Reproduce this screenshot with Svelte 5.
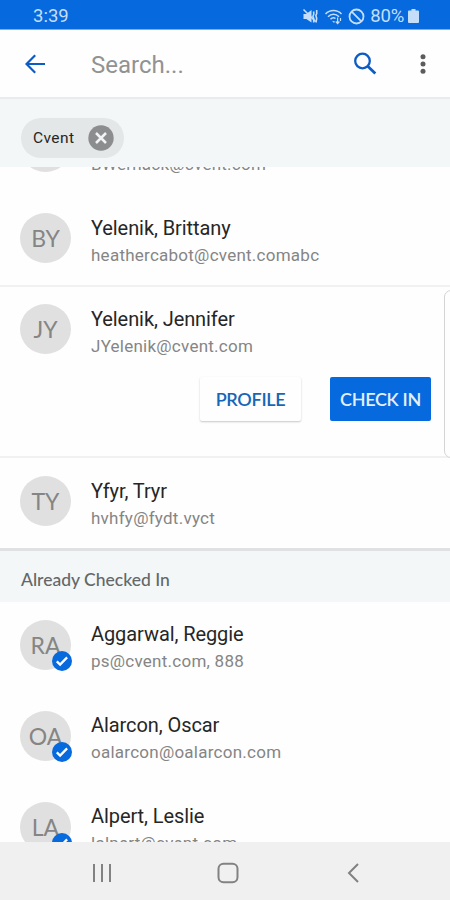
<script lang="ts">
	interface Attendee {
		initials: string;
		name: string;
		email: string;
		expanded?: boolean;
	}

	const query = 'Cvent';

	const pending: Attendee[] = [
		{ initials: '', name: '', email: 'BWernack@cvent.com' },
		{ initials: 'BY', name: 'Yelenik, Brittany', email: 'heathercabot@cvent.comabc' },
		{ initials: 'JY', name: 'Yelenik, Jennifer', email: 'JYelenik@cvent.com', expanded: true },
		{ initials: 'TY', name: 'Yfyr, Tryr', email: 'hvhfy@fydt.vyct' }
	];

	const checkedIn: Attendee[] = [
		{ initials: 'RA', name: 'Aggarwal, Reggie', email: 'ps@cvent.com, 888' },
		{ initials: 'OA', name: 'Alarcon, Oscar', email: 'oalarcon@oalarcon.com' },
		{ initials: 'LA', name: 'Alpert, Leslie', email: 'lalpert@cvent.com' }
	];
</script>

{#snippet person(attendee: Attendee, checked: boolean)}
	<div class="person">
		<div class="avatar">
			{attendee.initials}
			{#if checked}
				<svg class="badge" viewBox="0 0 20 20">
					<circle cx="10" cy="10" r="10" fill="#0669dd" />
					<path d="M4.8 10.4l3.3 3.2 7-7.2" fill="none" stroke="#fff" stroke-width="2.3" />
				</svg>
			{/if}
		</div>
		<div class="details">
			<div class="name">{attendee.name}</div>
			<div class="email">{attendee.email}</div>
		</div>
	</div>
{/snippet}

<div class="screen">
	<div class="status-bar">
		<span class="time">3:39</span>
		<div class="status-icons">
			<svg width="17" height="17" viewBox="0 0 17 17" fill="none" stroke="#c4defa" stroke-width="1.6">
				<path d="M1.5 6h2.8L9.5 2v12.5L4.3 11H1.5z" fill="#c4defa" stroke="none" />
				<path d="M11.7 3.5v3l-.8 2 .8 2v4M14.7 2v3.5l-.8 2 .8 3-.8 4" />
				<path d="M1.5 1.5l12 12" />
			</svg>
			<svg width="19" height="17" viewBox="0 0 19 17" fill="none" stroke="#c4defa" stroke-width="1.5">
				<path d="M1.5 6c4.5-4.6 11.5-4.6 16 0M4 8.7c3.2-3.2 7.8-3.2 11 0M6.5 11.3c1.6-1.6 3.5-1.8 5-.8" />
				<path d="M8 12.7l2 2.2 1-1.5z" fill="#c4defa" stroke="none" />
				<path d="M13.6 9.5v6M11.8 13.5l1.8 2 1.8-2M16.5 10v3" stroke-width="1.2" />
			</svg>
			<svg width="17" height="17" viewBox="0 0 17 17" fill="none" stroke="#c4defa" stroke-width="1.8">
				<circle cx="8.5" cy="8.5" r="7" />
				<path d="M3.6 3.6l9.8 9.8" />
			</svg>
			<span class="percent">80%</span>
			<svg class="battery" width="11" height="14" viewBox="0 0 11 14" fill="#c4defa">
				<path d="M3.5 0h4v1.5H10a1 1 0 0 1 1 1V13a1 1 0 0 1-1 1H1a1 1 0 0 1-1-1V2.5a1 1 0 0 1 1-1h2.5z" />
			</svg>
		</div>
	</div>

	<header class="toolbar">
		<svg width="20" height="20" viewBox="0 0 20 20" fill="none" stroke="#0d5cc4" stroke-width="2.2">
			<path d="M20 10H2M10.2 1.2L1.5 10l8.7 8.8" />
		</svg>
		<span class="placeholder">Search...</span>
		<svg class="search" width="24" height="24" viewBox="0 0 24 24" fill="none" stroke="#0d5cc4">
			<circle cx="9.5" cy="9" r="7.3" stroke-width="2.3" />
			<path d="M14.5 14l7.8 7.5" stroke-width="2.8" />
		</svg>
		<svg class="more" width="6" height="20" viewBox="0 0 6 20" fill="#5c5c5c">
			<circle cx="3" cy="2.7" r="2.5" />
			<circle cx="3" cy="10" r="2.5" />
			<circle cx="3" cy="17.3" r="2.5" />
		</svg>
	</header>

	<div class="filters">
		<div class="chip">
			<span>{query}</span>
			<svg width="26" height="26" viewBox="0 0 26 26">
				<circle cx="13" cy="13" r="12.7" fill="#8b8d8e" />
				<path d="M8 8l10 10M18 8L8 18" stroke="#f1f3f4" stroke-width="2.5" />
			</svg>
		</div>
	</div>

	<main class="list">
		<section class="pending">
			{#each pending as attendee}
				<div class="row" class:expanded={attendee.expanded}>
					{@render person(attendee, false)}
					{#if attendee.expanded}
						<div class="actions">
							<button class="profile">PROFILE</button>
							<button class="check-in">CHECK IN</button>
						</div>
						<div class="edge-panel"></div>
					{/if}
				</div>
			{/each}
		</section>
		<h2 class="section-title">Already Checked In</h2>
		<section>
			{#each checkedIn as attendee}
				<div class="row">
					{@render person(attendee, true)}
				</div>
			{/each}
		</section>
	</main>

	<nav class="nav-bar">
		<svg width="20" height="20" viewBox="0 0 20 20" stroke="#828282" stroke-width="2">
			<path d="M2 1v18M10 1v18M18 1v18" />
		</svg>
		<svg class="home" width="22" height="22" viewBox="0 0 22 22" fill="none" stroke="#828282" stroke-width="2">
			<rect x="1.5" y="1.8" width="19" height="18.4" rx="5" />
		</svg>
		<svg width="12" height="20" viewBox="0 0 12 20" fill="none" stroke="#828282" stroke-width="2">
			<path d="M11 1L2 10l9 9" />
		</svg>
	</nav>
</div>

<style>
	.screen {
		display: flex;
		flex-direction: column;
		width: 450px;
		height: 900px;
		overflow: hidden;
		background: #fefefe;
		font-family: Roboto, sans-serif;
	}

	svg {
		display: block;
		flex: none;
	}

	.status-bar {
		display: flex;
		flex: none;
		align-items: center;
		justify-content: space-between;
		box-sizing: border-box;
		height: 30px;
		padding: 3px 31px 0 33px;
		border-bottom: 1px solid #79aeea;
		background: #0669dd;
		color: #c4defa;
		font-size: 18.5px;
	}

	.status-icons {
		display: flex;
		align-items: center;
		gap: 5px;
	}

	.percent {
		letter-spacing: -0.2px;
	}

	.battery {
		margin-left: -1px;
	}

	.toolbar {
		display: flex;
		flex: none;
		align-items: center;
		box-sizing: border-box;
		height: 69px;
		padding: 0 24px 0 25px;
		border-bottom: 2px solid #e8ecee;
	}

	.placeholder {
		flex: 1;
		margin-left: 46px;
		padding-top: 2px;
		color: #929292;
		font-size: 24px;
	}

	.search {
		margin-right: 43px;
	}

	.filters {
		flex: none;
		box-sizing: border-box;
		height: 68px;
		padding: 19px 21px 0;
		background: #f3f7f8;
	}

	.chip {
		display: inline-flex;
		align-items: center;
		justify-content: space-between;
		box-sizing: border-box;
		width: 103px;
		height: 40px;
		padding: 0 10px 0 12px;
		border-radius: 20px;
		background: #e4e7e8;
		color: #262626;
		font-size: 15.5px;
		letter-spacing: 0.4px;
	}

	.list {
		flex: 1;
		min-height: 0;
		overflow: hidden;
	}

	/* list is scrolled part of the way through the first row */
	.pending {
		margin-top: -63px;
	}

	.row {
		position: relative;
		box-sizing: border-box;
		height: 91px;
		padding: 18px 19px 0 20px;
	}

	.pending .row:nth-child(n + 2):not(:last-child) {
		height: 92px;
		border-bottom: 2px solid #f1f1f2;
	}

	.pending .row.expanded:not(:last-child) {
		height: 171px;
		padding-top: 17px;
	}

	.pending .row:last-child {
		height: 90px;
	}

	.person {
		display: flex;
		gap: 20px;
	}

	.avatar {
		position: relative;
		width: 51px;
		height: 50px;
		border-radius: 50%;
		background: #e0e0e0;
		color: #858585;
		font-family: Lato, sans-serif;
		font-size: 23px;
		line-height: 50px;
		text-align: center;
	}

	.badge {
		position: absolute;
		right: -1px;
		bottom: -1px;
		width: 20px;
		height: 20px;
	}

	.details {
		padding-top: 1px;
		white-space: nowrap;
	}

	.pending .details {
		padding-top: 2px;
	}

	.name {
		height: 27px;
		color: #262626;
		font-size: 20px;
		line-height: 27px;
		letter-spacing: -0.08px;
	}

	.email {
		color: #858585;
		font-size: 17px;
		line-height: 27px;
		letter-spacing: 0.25px;
	}

	.actions {
		display: flex;
		justify-content: flex-end;
		gap: 29px;
		margin-top: 17px;
	}

	button {
		width: 101px;
		height: 44px;
		padding: 0;
		border: none;
		border-radius: 2px;
		font-family: Lato, sans-serif;
		font-size: 18px;
		font-weight: 600;
		letter-spacing: -0.3px;
		white-space: nowrap;
	}

	.profile {
		background: #fefefe;
		box-shadow: 0 1px 2px rgba(0, 0, 0, 0.22);
		color: #1467b8;
	}

	.check-in {
		background: #0669dd;
		color: #e2effd;
	}

	.edge-panel {
		position: absolute;
		top: 3px;
		right: -8px;
		box-sizing: border-box;
		width: 14px;
		height: 168px;
		border: 1.5px solid #d4d4d4;
		border-radius: 8px;
		background: #fefefe;
	}

	.section-title {
		box-sizing: border-box;
		height: 54px;
		margin: 0;
		padding-left: 21px;
		border-top: 3px solid #dfe1e2;
		background: #f3f7f8;
		color: #646768;
		font-family: Lato, sans-serif;
		font-size: 17.5px;
		font-weight: 500;
		line-height: 58px;
	}

	.nav-bar {
		display: flex;
		flex: none;
		align-items: center;
		justify-content: space-between;
		box-sizing: border-box;
		height: 58px;
		padding: 3px 91px 0 92px;
		background: #f0f0f0;
	}

	.home {
		margin-right: 4px;
	}
</style>
